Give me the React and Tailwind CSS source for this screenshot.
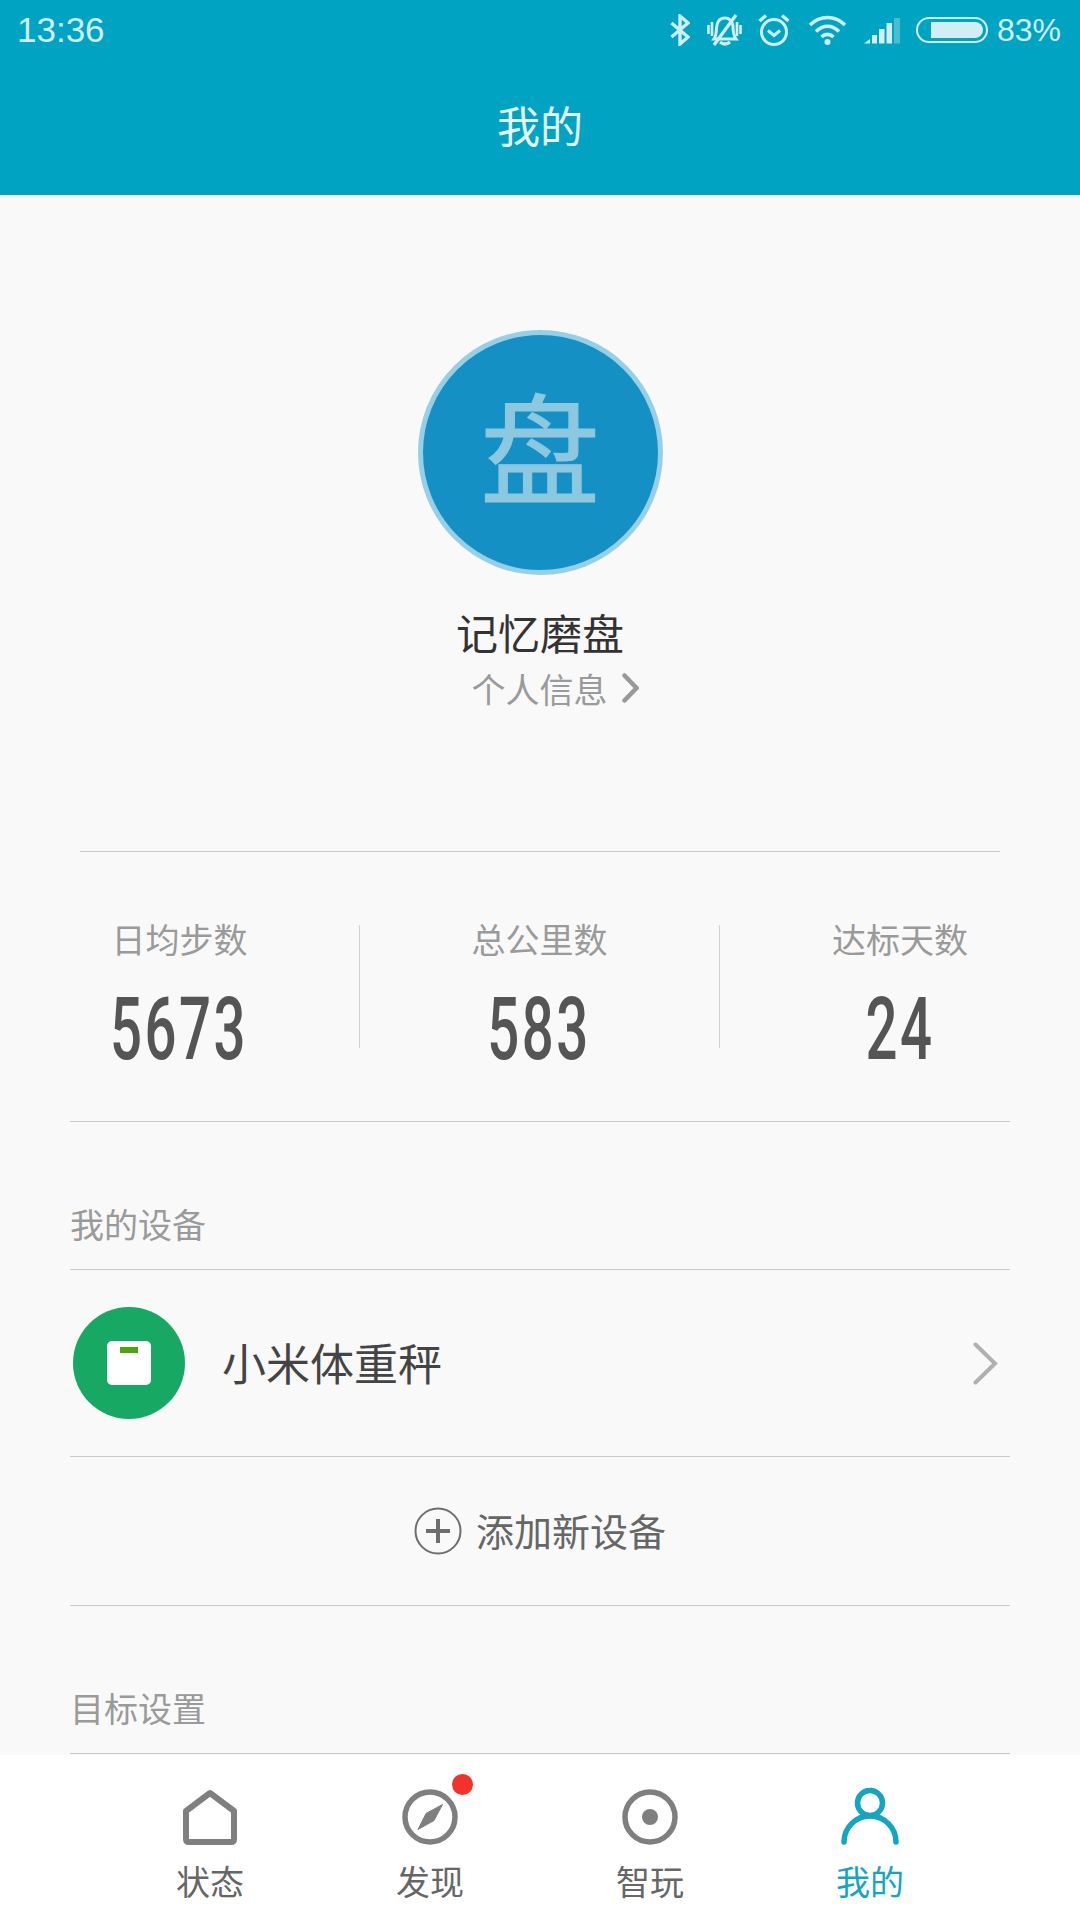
const CJK = "font-['Noto_Sans_CJK_SC','Noto_Sans',sans-serif]";

function StatusIcons() {
  return (
    <div className="flex items-center text-[#cfeff5]">
      {/* bluetooth */}
      <svg width="20" height="32" viewBox="0 0 20 32" fill="none" stroke="currentColor" strokeWidth="3.4">
        <path d="M1.5 9 L18 23 L10 30 V2 L18 9 L1.5 23" />
      </svg>
      {/* vibrate, crossed out */}
      <svg className="ml-[17px]" width="35" height="32" viewBox="0 0 35 32" fill="none" stroke="currentColor" strokeWidth="3">
        <path d="M7 25 C10 21 9 15 10 11 C11 6 14 4 18 4 C22 4 25 7 26 12 C26 17 26 21 29 25 Z" />
        <path d="M13 28 Q18 32 23 28" strokeWidth="3.4" />
        <path d="M1.5 11 V20 M5 8 V22 M30 8 V22 M33.5 11 V20" strokeWidth="2.6" />
        <path d="M7 31 L29 1" strokeWidth="3.2" />
      </svg>
      {/* alarm */}
      <svg className="ml-[16px]" width="32" height="32" viewBox="0 0 32 32" fill="none" stroke="currentColor" strokeWidth="3">
        <circle cx="16" cy="18" r="12.5" />
        <path d="M10 16.5 L16 21.5 L22 16.5" strokeWidth="3" />
        <path d="M1.5 7 L8 1.5 M30.5 7 L24 1.5" strokeWidth="3.4" />
      </svg>
      {/* wifi */}
      <svg className="ml-[18px]" width="39" height="32" viewBox="0 0 39 32" fill="none" stroke="currentColor" strokeWidth="3.6">
        <path d="M2 11 C12 1 27 1 37 11" />
        <path d="M8 17.5 C15 10.5 24 10.5 31 17.5" />
        <path d="M13.5 23 C17 19.5 22 19.5 25.5 23" />
        <circle cx="19.5" cy="28" r="3" fill="currentColor" stroke="none" />
      </svg>
      {/* signal */}
      <svg className="ml-[17px]" width="36" height="32" viewBox="0 0 36 32" fill="currentColor">
        <path d="M0 29.5 L6 25 V29.5 Z" />
        <rect x="8" y="21" width="5" height="8.5" />
        <rect x="15" y="15" width="5.5" height="14.5" />
        <rect x="22.5" y="9" width="5.5" height="20.5" />
        <rect x="30" y="4" width="6" height="25.5" opacity="0.35" />
      </svg>
      {/* battery */}
      <div className="ml-[16px] flex h-[26px] w-[72px] rounded-full border-2 border-[#cfeff5] py-[3px] pl-[13px] pr-[3px]">
        <div className="w-full rounded-r-full bg-[#cfeff5]" />
      </div>
      <span className="ml-[9px] font-['Liberation_Sans',sans-serif] text-[32px] leading-none">83%</span>
    </div>
  );
}

function Stat({ label, value, className }) {
  return (
    <div className={`flex flex-col items-center ${className}`}>
      <div className="h-[48px] text-[34px] leading-[48px] text-[#9a9a9a]">{label}</div>
      <div className="mt-[22px] inline-block h-[88px] origin-center scale-x-[0.64] font-['Roboto',sans-serif] text-[88px] font-medium leading-[88px] tracking-[4px] text-[#555555]">
        {value}
      </div>
    </div>
  );
}

function Rule() {
  return <div className="mx-[70px] h-px bg-[#c9c9c9]" />;
}

function TabIcon({ name }) {
  if (name === "home")
    return (
      <svg width="60" height="60" viewBox="0 0 60 60" fill="none" stroke="#7f7f7f" strokeWidth="6" strokeLinejoin="round">
        <path d="M30 6 L54 24 V52 Q54 55 51 55 H9 Q6 55 6 52 V24 Z" />
      </svg>
    );
  if (name === "compass")
    return (
      <svg width="60" height="60" viewBox="0 0 60 60" fill="none" stroke="#7f7f7f" strokeWidth="5.5">
        <circle cx="30" cy="30" r="25" />
        <path d="M42.5 17.5 L34 33.5 L18 42.5 L26 26.5 Z" fill="#7f7f7f" stroke="#7f7f7f" strokeWidth="1" strokeLinejoin="round" />
      </svg>
    );
  if (name === "target")
    return (
      <svg width="60" height="60" viewBox="0 0 60 60" fill="none" stroke="#7f7f7f" strokeWidth="5.5">
        <circle cx="30" cy="30" r="25" />
        <circle cx="30" cy="30" r="8" fill="#7f7f7f" stroke="none" />
      </svg>
    );
  return (
    <svg width="60" height="60" viewBox="0 0 60 60" fill="none" stroke="#14a5c0" strokeWidth="5.5" strokeLinecap="round">
      <circle cx="30" cy="16" r="12.5" />
      <path d="M4 55 A26 26 0 0 1 56 55" />
    </svg>
  );
}

const tabs = [
  { name: "home", label: "状态" },
  { name: "compass", label: "发现", dot: true },
  { name: "target", label: "智玩" },
  { name: "person", label: "我的", active: true },
];

export default function App() {
  return (
    <div className={`flex h-[1920px] w-[1080px] flex-col overflow-hidden bg-[#f9f9f9] ${CJK}`}>
      {/* Header */}
      <div className="flex h-[195px] shrink-0 flex-col bg-[#00a4c2]">
        <div className="flex h-[60px] items-center justify-between pl-[17px] pr-[19px]">
          <span className="pb-[2px] font-['Liberation_Sans',sans-serif] text-[35px] leading-none text-[#cfeff5]">13:36</span>
          <StatusIcons />
        </div>
        <div className="flex h-[135px] items-center justify-center pb-[6px] text-[43px] text-[#e6f7fa]">我的</div>
      </div>

      <div className="min-h-0 flex-1 overflow-hidden">
        {/* Profile */}
        <div className="flex flex-col items-center pt-[135px]">
          <div className="flex h-[245px] w-[245px] items-center justify-center rounded-full border-[5px] border-[#97d0e6] bg-[#1590c4] pb-[18px] text-[120px] font-normal leading-none text-[#8cc8e0] [-webkit-text-stroke:1px_#8cc8e0]">
            盘
          </div>
          <div className="mt-[28px] h-[58px] text-[42px] leading-[58px] text-[#333333]">记忆磨盘</div>
          <div className="mt-[3px] flex h-[48px] items-center pl-[30px] text-[34px] text-[#9a9a9a]">
            个人信息
            <svg className="ml-[14px]" width="17" height="30" viewBox="0 0 17 30" fill="none" stroke="#999999" strokeWidth="4.5" strokeLinecap="round">
              <path d="M2.5 2.5 L14.5 15 L2.5 27.5" />
            </svg>
          </div>
        </div>

        <div className="mx-[80px] mt-[139px] h-px bg-[#c9c9c9]" />

        {/* Stats */}
        <div className="flex h-[269px] items-start pt-[63px]">
          <Stat label="日均步数" value="5673" className="w-[359px]" />
          <div className="mt-[10px] h-[123px] w-px bg-[#d2d2d2]" />
          <Stat label="总公里数" value="583" className="w-[359px]" />
          <div className="mt-[10px] h-[123px] w-px bg-[#d2d2d2]" />
          <Stat label="达标天数" value="24" className="w-[360px]" />
        </div>

        <Rule />

        {/* Devices */}
        <div className="mx-[70px] mt-[78px] mb-[21px] h-[48px] text-[34px] leading-[48px] text-[#9a9a9a]">我的设备</div>
        <Rule />
        <div className="mx-[70px] flex h-[186px] items-center">
          <div className="ml-[3px] flex h-[112px] w-[112px] items-center justify-center rounded-full bg-[#17a863]">
            <div className="flex h-[44px] w-[44px] justify-center rounded-[5px] bg-white pt-[6px]">
              <div className="h-[6px] w-[18px] bg-[#4ca60e]" />
            </div>
          </div>
          <div className="ml-[37px] flex-1 pb-[3px] text-[44px] text-[#444444]">小米体重秤</div>
          <svg className="mr-[12px]" width="25" height="43" viewBox="0 0 25 43" fill="none" stroke="#b0b0b0" strokeWidth="4" strokeLinecap="round">
            <path d="M2.5 2.5 L22 21.5 L2.5 40.5" />
          </svg>
        </div>
        <Rule />
        <div className="flex h-[148px] items-center justify-center text-[38px] text-[#666666]">
          <svg width="48" height="48" viewBox="0 0 48 48" fill="none" stroke="#6e6e6e">
            <circle cx="24" cy="24" r="22.5" strokeWidth="2" />
            <path d="M12 24 H36 M24 12 V36" strokeWidth="4" />
          </svg>
          <span className="ml-[14px] pb-[4px]">添加新设备</span>
        </div>
        <Rule />

        {/* Goals */}
        <div className="mx-[70px] mt-[78px] mb-[21px] h-[48px] text-[34px] leading-[48px] text-[#9a9a9a]">目标设置</div>
        <Rule />
      </div>

      {/* Tab bar */}
      <div className="grid h-[165px] shrink-0 grid-cols-4 bg-white px-[100px] pt-[32px]">
        {tabs.map((tab) => (
          <div key={tab.name} className="flex flex-col items-center">
            <div className="relative h-[60px] w-[60px]">
              <TabIcon name={tab.name} />
              {tab.dot && (
                <div className="absolute left-[52px] top-[-13px] h-[21px] w-[21px] rounded-full bg-[#f1332b]" />
              )}
            </div>
            <div className={`mt-[10px] h-[48px] text-[34px] leading-[48px] ${tab.active ? "text-[#14a5c0]" : "text-[#666666]"}`}>
              {tab.label}
            </div>
          </div>
        ))}
      </div>
    </div>
  );
}
